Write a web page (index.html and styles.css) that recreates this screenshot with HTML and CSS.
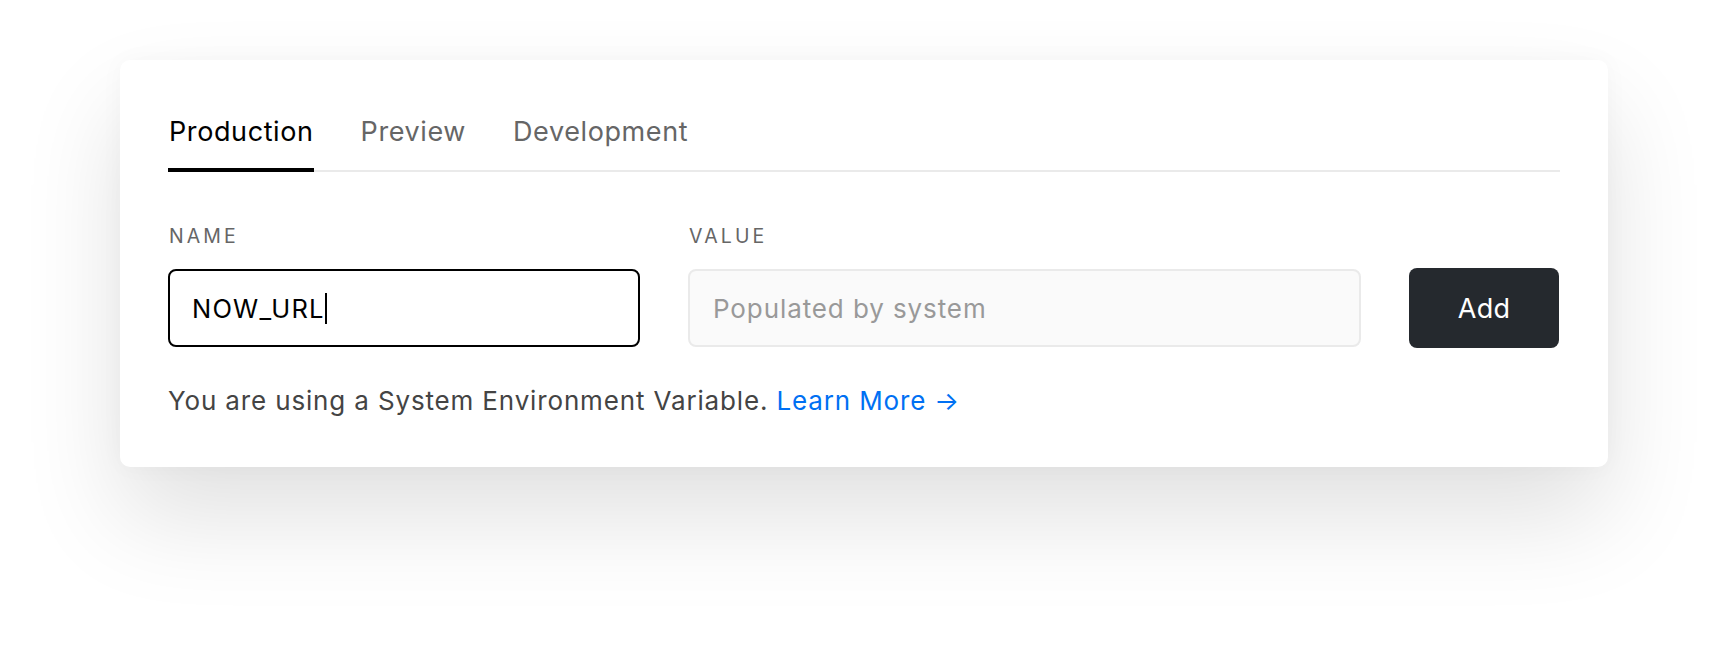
FILE: index.html
```html
<!DOCTYPE html>
<html lang="en">
<head>
<meta charset="utf-8">
<title>Environment Variables</title>
<link rel="stylesheet" href="styles.css">
</head>
<body>
<div class="card">
  <nav class="tabs">
    <div class="tab active">Production</div>
    <div class="tab">Preview</div>
    <div class="tab">Development</div>
  </nav>
  <div class="form">
    <div class="col col-name">
      <div class="label">NAME</div>
      <div class="field field-name"><span class="field-text">NOW_URL</span><span class="caret"></span></div>
    </div>
    <div class="col col-value">
      <div class="label">VALUE</div>
      <div class="field field-value"><span class="placeholder">Populated by system</span></div>
    </div>
    <div class="col col-btn">
      <button class="add-btn">Add</button>
    </div>
  </div>
  <p class="note">You are using a System Environment Variable. <a class="link" href="#">Learn More →</a></p>
</div>
</body>
</html>
```

FILE: styles.css
```css
* { box-sizing: border-box; }
html, body {
  margin: 0;
  padding: 0;
  background: #ffffff;
}
body {
  font-family: Inter, "Noto Sans", "Liberation Sans", sans-serif;
  width: 1728px;
  height: 648px;
  overflow: hidden;
  padding-top: 60px;
  padding-left: 120px;
}
.card {
  width: 1488px;
  height: 407px;
  background: #fff;
  border-radius: 10px;
  box-shadow: 0 50px 100px rgba(0, 0, 0, 0.12), 0 0 24px rgba(0, 0, 0, 0.03);
  padding: 55px 48px 0 48px;
}
.tabs {
  display: flex;
  gap: 46px;
  border-bottom: 2px solid #eaeaea;
}
.tab {
  font-size: 27px;
  line-height: 34px;
  letter-spacing: 0.6px;
  color: #666;
  padding-bottom: 19px;
  margin-bottom: -2px;
  border-bottom: 4px solid transparent;
  padding-left: 1px;
  padding-right: 0;
}
.tab.active {
  color: #000;
  border-bottom-color: #000;
}
.form {
  display: grid;
  grid-template-columns: 472px 673px 150px;
  column-gap: 48px;
  align-items: end;
  margin-top: 52px;
}
.label {
  font-size: 19.5px;
  line-height: 24px;
  color: #666;
  letter-spacing: 3.1px;
  margin-bottom: 21px;
  padding-left: 1px;
}
.field {
  height: 78px;
  border-radius: 8px;
  display: flex;
  align-items: center;
}
.field-name {
  border: 2px solid #000;
  padding-left: 22px;
  font-size: 25.5px;
  letter-spacing: 1.2px;
  color: #000;
}
.caret {
  display: inline-block;
  width: 2px;
  height: 31px;
  background: #000;
  margin-left: 0;
}
.field-value {
  border: 2px solid #eaeaea;
  background: #fafafa;
  padding-left: 23px;
  font-size: 26px;
  letter-spacing: 0.9px;
}
.placeholder {
  color: #999;
}
.add-btn {
  width: 150px;
  height: 80px;
  margin-bottom: -1px;
  border: none;
  border-radius: 8px;
  background: #25292e;
  color: #fff;
  font-family: inherit;
  font-size: 27px;
  letter-spacing: 0.3px;
  padding: 0;
}
.note {
  margin: 38px 0 0 0;
  font-size: 26px;
  line-height: 32px;
  letter-spacing: 0.85px;
  color: #444;
}
.link {
  color: #0070f3;
  text-decoration: none;
}
```
